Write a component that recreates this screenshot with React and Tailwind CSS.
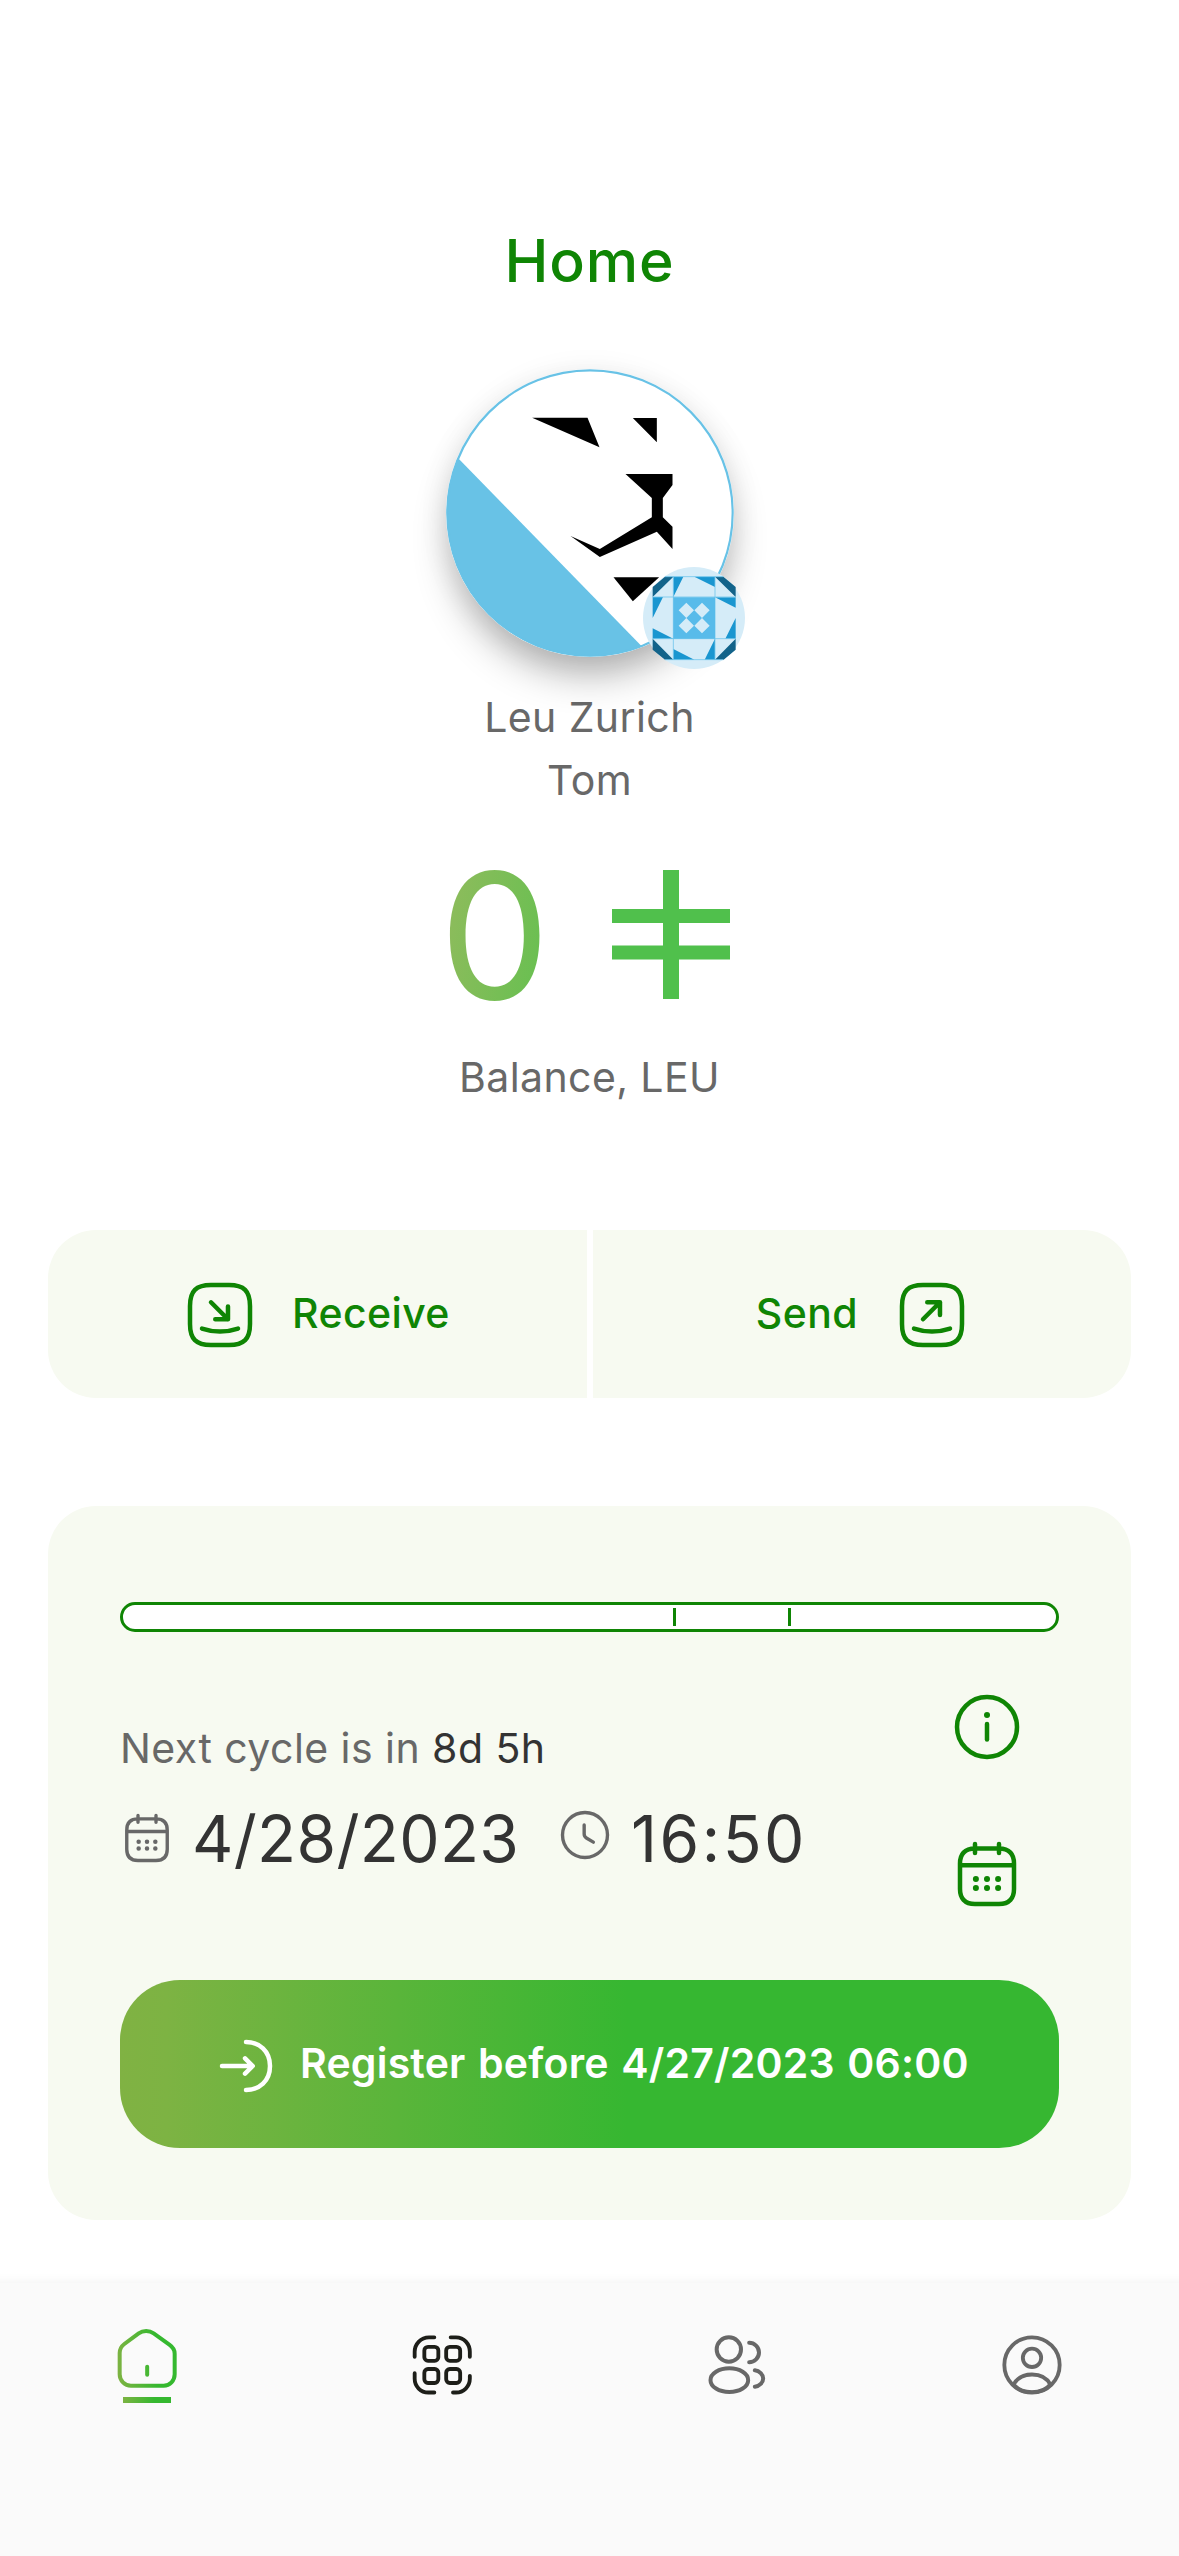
const squircle =
  'M9 22h6c5 0 7-2 7-7V9c0-5-2-7-7-7H9C4 2 2 4 2 9v6c0 5 2 7 7 7z';

function Icon({ className, children }) {
  return (
    <svg
      className={className}
      viewBox="0 0 24 24"
      fill="none"
      stroke="currentColor"
      strokeWidth="1.5"
      strokeLinecap="round"
      strokeLinejoin="round"
    >
      {children}
    </svg>
  );
}

function ReceiveIcon() {
  return (
    <Icon className="mt-0.5 size-18 shrink-0">
      <path d={squircle} />
      <path d="M9 7.76l5.66 5.66M10.42 13.42h4.24V9.18M6 16.51c3.89 1.3 8.11 1.3 12 0" />
    </Icon>
  );
}

function SendIcon() {
  return (
    <Icon className="mt-0.5 size-18 shrink-0">
      <path d={squircle} />
      <path d="M9 13.42l5.66-5.66M10.42 7.76h4.24V12M6 16.51c3.89 1.3 8.11 1.3 12 0" />
    </Icon>
  );
}

function CalendarIcon({ className }) {
  return (
    <Icon className={className}>
      <path d="M8 2v3M16 2v3M3.5 9.09h17M21 8.5V17c0 3-1.5 5-5 5H8c-3.5 0-5-2-5-5V8.5c0-3 1.5-5 5-5h8c3.5 0 5 2 5 5z" />
      <path
        strokeWidth="2"
        d="M8.29 13.7h.01M11.995 13.7h.01M15.695 13.7h.01M8.29 16.7h.01M11.995 16.7h.01M15.695 16.7h.01"
      />
    </Icon>
  );
}

function ClockIcon({ className }) {
  return (
    <Icon className={className}>
      <circle cx="12" cy="12" r="10" />
      <path d="M15.71 15.18l-3.1-1.85c-.54-.32-.98-1.09-.98-1.72v-4.1" />
    </Icon>
  );
}

function InfoIcon() {
  return (
    <Icon className="size-18">
      <circle cx="12" cy="12" r="10" />
      <path d="M12 16.2v-5.2" />
      <path strokeWidth="2" d="M11.995 8h.01" />
    </Icon>
  );
}

function LoginIcon() {
  return (
    <Icon className="mt-[3px] size-18 shrink-0">
      <path d="M11.68 14.56L14.24 12l-2.56-2.56M4 12h10.17M12 4c4.42 0 8 3 8 8s-3.58 8-8 8" />
    </Icon>
  );
}

function LionAvatar() {
  return (
    <svg className="block size-72" viewBox="76.5 57 864 864">
      <defs>
        <clipPath id="face">
          <circle cx="508.5" cy="489" r="430" />
        </clipPath>
      </defs>
      <circle cx="508.5" cy="489" r="431" fill="#fff" />
      <path d="M60 270.5L700 926V960H40V270z" fill="#68c2e6" clipPath="url(#face)" />
      <circle cx="508.5" cy="489" r="428" fill="none" stroke="#68c2e6" strokeWidth="6.5" />
      <path d="M335 203H501L537 292zM637 204H709V277z" />
      <path d="M615 372H756V405L727 444V502L756 530V597L709 545L538 621L450 558L538 597L694 502V444z" />
      <path d="M579 682H716L637 754z" />
    </svg>
  );
}

function IdenticonBadge() {
  return (
    <svg className="block size-[102px]" viewBox="670 651 306 306">
      <circle cx="823" cy="804" r="153" fill="#d5ecf8" />
      <path
        fill="#12638a"
        d="M699 741V711L736 680H761zM886 680H911L948 711V741zM948 866V899L912 929H886zM699 866V899L736 929H761z"
      />
      <path
        fill="#1a96d0"
        d="M761 680H791L761 741zM824 680H886V711zM699 741H730L699 804zM699 835L761 866H699zM886 742L948 773V742zM948 804V866H917zM761 897L824 929H761zM886 866V929H855z"
      />
      <path fill="none" stroke="#74c6ec" strokeWidth="2.5" d="M736 680H911M736 929H911M699 741H948M699 866H948M761 680V929M886 680V929" />
      <path fill="#58bbea" d="M761 742H886V866H761z" />
      <path
        fill="#d5ecf8"
        d="M800 758l23 23l-23 23l-23-23zM847 758l23 23l-23 23l-23-23zM800 804l23 23l-23 23l-23-23zM847 804l23 23l-23 23l-23-23z"
      />
    </svg>
  );
}

function LeuSymbol() {
  return (
    <svg className="block h-[129px] w-[118px]" viewBox="0 0 118 129" fill="#50c04c">
      <path d="M51 0h16v39h51v14H67v22.500h51v14H67V129H51V89.500H0v-14h51V53H0V39h51z" />
    </svg>
  );
}

function HomeNavIcon() {
  return (
    <svg className="size-18" viewBox="94 162 216 216" fill="none" stroke="url(#leaf)" strokeWidth="12" strokeLinecap="round">
      <defs>
        <linearGradient id="leaf" gradientUnits="userSpaceOnUse" x1="114" y1="270" x2="230" y2="262">
          <stop offset="0" stopColor="#7cb342" />
          <stop offset="1" stopColor="#35b82f" />
        </linearGradient>
      </defs>
      <path d="M120 252C120 241 125 232 134 225L177 193C190 184 209 184 222 193L269 227C279 234 285 243 285 254V316C285 335 271 350 252 350H154C135 350 120 335 120 316z" />
      <path d="M202.500 293V317" />
    </svg>
  );
}

function ScanNavIcon() {
  return (
    <svg className="size-18 text-[#1d1e19]" viewBox="978 177.500 216 216" fill="none" stroke="currentColor" strokeWidth="11.500" strokeLinecap="round">
      <path d="M1004 261V246C1004 222 1023 202.500 1047 202.500H1063M1112 202.500H1128C1152 202.500 1169.500 222 1169.500 246V261M1004 310V327C1004 350 1022 368 1045 368H1063M1119 368H1128C1151 368 1169.500 350 1169.500 327V318" />
      <rect x="1033" y="231" width="42" height="42" rx="11" />
      <rect x="1098.500" y="231" width="42" height="42" rx="11" />
      <rect x="1033" y="297.500" width="42" height="42" rx="11" />
      <rect x="1098.500" y="297.500" width="42" height="42" rx="11" />
    </svg>
  );
}

function PeopleNavIcon() {
  return (
    <svg className="size-18 text-[#686868]" viewBox="122.500 177.500 216 216" fill="none" stroke="currentColor" strokeWidth="12" strokeLinecap="round">
      <circle cx="206" cy="239" r="36.500" />
      <ellipse cx="207.500" cy="331" rx="56.500" ry="35.500" />
      <path d="M267 219C283 219 296.500 232 296.500 248C296.500 264 283 277 267 277M284 301.500C298 303 309 314 309 326C309 338 298 349 284 351" />
    </svg>
  );
}

function ProfileNavIcon() {
  return (
    <svg className="size-18 text-[#686868]" viewBox="1007 177.500 216 216" fill="none" stroke="currentColor" strokeWidth="11.500">
      <circle cx="1115" cy="285.500" r="83" />
      <circle cx="1115" cy="264" r="27.500" />
      <path d="M1060 344C1070 325 1090 314 1115 314C1140 314 1160 325 1170 344C1158 359 1138 367 1115 367C1092 367 1072 359 1060 344z" />
    </svg>
  );
}

export default function App() {
  return (
    <div className="flex h-[2556px] w-[1179px] flex-col overflow-hidden bg-white font-['Inter',sans-serif] text-[41px] leading-[63px] whitespace-nowrap text-[#686868]">
      <header className="pt-[225px] text-center text-[59px] leading-[72px] font-medium tracking-[0.9px] text-[#0f8504]">
        <h1>Home</h1>
      </header>

      <section className="flex flex-col items-center">
        <div className="relative mt-18 size-72 rounded-full shadow-[0_4px_30px_rgba(0,0,0,0.08),0_24px_38px_-6px_rgba(0,0,0,0.29)]">
          <LionAvatar />
          <div className="absolute top-[198px] left-[197.5px]">
            <IdenticonBadge />
          </div>
        </div>
        <p className="mt-[29px] tracking-[0.4px]">Leu Zurich</p>
        <p className="tracking-[0.4px]">Tom</p>
        <div className="mt-[18px] flex h-[210px] w-[300px] items-start justify-between pr-2.5">
          <span className="bg-linear-[100deg,#94bb5e_0%,#62c04f_100%] bg-clip-text text-[175px] leading-[211px] text-transparent">0</span>
          <div className="pt-10">
            <LeuSymbol />
          </div>
        </div>
        <p className="mt-1.5 tracking-[0.4px]">Balance, LEU</p>
      </section>

      <section className="mx-12 mt-[121px] grid h-42 shrink-0 grid-cols-2 gap-1.5 font-medium text-[#0f8504]">
        <button className="flex items-center rounded-l-[48px] bg-[#f7faf1] pl-[136px]">
          <ReceiveIcon />
          <span className="-mt-0.5 ml-9 tracking-[0.4px]">Receive</span>
        </button>
        <button className="flex items-center justify-end rounded-r-[48px] bg-[#f7faf1] pr-[163px]">
          <span className="-mt-0.5 mr-[38px] tracking-[0.4px]">Send</span>
          <SendIcon />
        </button>
      </section>

      <section className="mx-12 mt-27 h-[714px] shrink-0 rounded-[48px] bg-[#f7faf1] px-18 pt-24">
        <div className="relative h-[30px] rounded-full border-3 border-[#0f8504] bg-white">
          <i className="absolute top-[3px] left-[550px] h-[18px] w-[3px] bg-[#0f8504]" />
          <i className="absolute top-[3px] left-[665px] h-[18px] w-[3px] bg-[#0f8504]" />
        </div>

        <div className="flex justify-between">
          <div className="pt-[85px]">
            <p className="tracking-[0.45px]">
              Next cycle is in <span className="text-[#333]">8d 5h</span>
            </p>
            <div className="mt-2.5 flex items-start text-[64px] leading-[97px] text-[#333]">
              <CalendarIcon className="mt-[21px] size-13.5 text-[#686868]" />
              <span className="ml-[18px] w-[366px] tracking-[0.35px]">4/28/2023</span>
              <ClockIcon className="mt-[18px] size-13.5 text-[#686868]" />
              <span className="ml-[19px] tracking-[2.5px]">16:50</span>
            </div>
          </div>
          <div className="mr-9 flex flex-col gap-[75px] pt-[58.5px] text-[#0f8504]">
            <InfoIcon />
            <CalendarIcon className="size-18" />
          </div>
        </div>

        <button className="mt-[70.5px] flex h-42 w-full items-center rounded-[60px] bg-linear-[90deg,#80b243_0%,#7db343_5%,#36b731_54%] pl-[90px] font-semibold text-white">
          <LoginIcon />
          <span className="-mt-0.5 ml-[18px] tracking-[0.2px] [word-spacing:2px]">Register before 4/27/2023 06:00</span>
        </button>
      </section>

      <nav className="mt-auto grid h-[273px] shrink-0 grid-cols-4 justify-items-center bg-[#fafafa] pt-[46px] shadow-[0_8px_10px_9px_rgba(0,0,0,0.055)]">
        <div className="-mt-1.5 flex flex-col items-center">
          <HomeNavIcon />
          <span className="mt-0.5 h-1.5 w-12 bg-linear-[95deg,#7cb342_0%,#35b82f_65%]" />
        </div>
        <ScanNavIcon />
        <PeopleNavIcon />
        <ProfileNavIcon />
      </nav>
    </div>
  );
}
